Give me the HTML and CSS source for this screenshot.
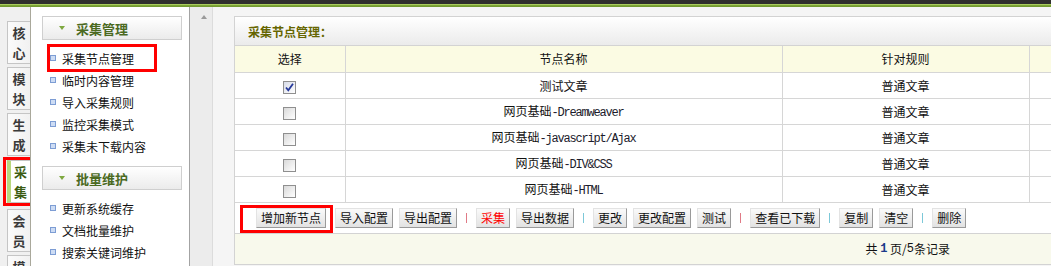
FILE: index.html
```html
<!DOCTYPE html>
<html lang="zh">
<head>
<meta charset="utf-8">
<title>采集节点管理</title>
<link rel="stylesheet" href="styles.css">
</head>
<body>
<div class="topbar"></div>
<div class="layout">
  <div class="tabs">
    <div class="tab">核<br>心</div>
    <div class="tab">模<br>块</div>
    <div class="tab">生<br>成</div>
    <div class="tab on">采<br>集</div>
    <div class="tab">会<br>员</div>
    <div class="tab">模<br>板</div>
  </div>
  <div class="sidebar">
    <div class="menu-head"><span class="tri"></span>采集管理</div>
    <ul class="menu">
      <li class="hl">采集节点管理</li>
      <li>临时内容管理</li>
      <li>导入采集规则</li>
      <li>监控采集模式</li>
      <li>采集未下载内容</li>
    </ul>
    <div class="menu-head"><span class="tri"></span>批量维护</div>
    <ul class="menu">
      <li>更新系统缓存</li>
      <li>文档批量维护</li>
      <li>搜索关键词维护</li>
    </ul>
  </div>
  <div class="scroll"><span class="up"></span></div>
  <div class="main">
    <div class="box">
      <div class="box-title">采集节点管理：</div>
      <table class="grid">
        <colgroup><col class="c1"><col class="c2"><col class="c3"><col class="c4"></colgroup>
        <thead>
          <tr><th>选择</th><th>节点名称</th><th>针对规则</th><th></th></tr>
        </thead>
        <tbody>
          <tr><td><span class="cb checked"><svg width="11" height="11" viewBox="0 0 11 11"><path d="M2 5.5 L4.3 8.3 L9 1.8" fill="none" stroke="#26399a" stroke-width="1.8"/></svg></span></td><td>测试文章</td><td>普通文章</td><td></td></tr>
          <tr><td><span class="cb"></span></td><td>网页基础<span class="en">-Dreamweaver</span></td><td>普通文章</td><td></td></tr>
          <tr><td><span class="cb"></span></td><td>网页基础<span class="en">-javascript/Ajax</span></td><td>普通文章</td><td></td></tr>
          <tr><td><span class="cb"></span></td><td>网页基础<span class="en">-DIV&amp;CSS</span></td><td>普通文章</td><td></td></tr>
          <tr><td><span class="cb"></span></td><td>网页基础<span class="en">-HTML</span></td><td>普通文章</td><td></td></tr>
        </tbody>
      </table>
      <div class="toolbar">
        <button class="btn first hl-btn">增加新节点</button>
        <button class="btn">导入配置</button>
        <button class="btn">导出配置</button>
        <span class="sep red"></span>
        <button class="btn warn">采集</button>
        <button class="btn">导出数据</button>
        <span class="sep cyan"></span>
        <button class="btn">更改</button>
        <button class="btn">更改配置</button>
        <button class="btn">测试</button>
        <span class="sep red"></span>
        <button class="btn">查看已下载</button>
        <span class="sep cyan"></span>
        <button class="btn">复制</button>
        <button class="btn">清空</button>
        <span class="sep cyan"></span>
        <button class="btn">删除</button>
      </div>
      <div class="pager">共 <b class="num">1</b> 页/<span class="num2">5</span>条记录</div>
    </div>
  </div>
</div>
</body>
</html>
```
FILE: styles.css
```css
*, *::before, *::after { box-sizing: border-box; }
html, body { margin: 0; padding: 0; }
body {
  width: 1051px;
  height: 266px;
  overflow: hidden;
  background: #f5f5f5;
  font-family: "Noto Sans CJK SC", "Liberation Sans", sans-serif;
  font-size: 12px;
  color: #000;
}
.topbar {
  height: 7px;
  background: linear-gradient(#2f2f2d 0, #2f2f2d 4px, #a9cc5e 4px, #a9cc5e 5px, #82aa38 5px, #6e9530 7px);
}
.layout { display: flex; height: 259px; overflow: hidden; }

/* left tabs */
.tabs {
  flex: none;
  width: 31px;
  border-right: 1px solid #a9a89b;
  background: #f0f0f0;
  padding-top: 14px;
  overflow: hidden;
}
.tab {
  margin-left: 7px;
  width: 23px;
  height: 43px;
  margin-bottom: 3px;
  border: 1px solid #c5c5c5;
  border-right: none;
  background: linear-gradient(90deg, #fbfbfb, #f1f1f1);
  display: flex;
  align-items: center;
  justify-content: center;
  text-align: center;
  font-weight: bold;
  font-size: 13px;
  line-height: 20px;
  color: #3a3a3a;
}
.tab.on {
  position: relative;
  margin-top: 4px;
  margin-bottom: 6px;
  background: #fff;
  border-left: 4px solid #b8d67c;
  color: #3c5c12;
}
.tab.on::after {
  content: "";
  position: absolute;
  left: -8px;
  top: -4px;
  width: 30px;
  bottom: -4px;
  border: 3px solid #f00;
}

/* sidebar */
.sidebar {
  flex: none;
  width: 159px;
  border-right: 1px solid #a3a3a3;
  background: #fff;
  padding: 9px 7px 0 11px;
}
.menu-head {
  height: 24px;
  border: 1px solid #cfcfcf;
  background: linear-gradient(#ffffff, #ebebeb);
  font-weight: bold;
  font-size: 13px;
  color: #4b6a1f;
  display: flex;
  align-items: center;
  padding-left: 16px;
}
.tri {
  width: 0;
  height: 0;
  border-left: 3px solid transparent;
  border-right: 3px solid transparent;
  border-top: 4px solid #7ea83f;
  margin-right: 11px;
  box-sizing: content-box;
}
.menu {
  list-style: none;
  margin: 0;
  padding: 7px 0 9px 8px;
}
.menu li {
  position: relative;
  height: 22px;
  display: flex;
  align-items: center;
  color: #111;
}
.menu li::before {
  content: "";
  width: 6px;
  height: 6px;
  border: 1px solid #7d9dd4;
  background: #cddcf4;
  margin-right: 6px;
}
.menu li.hl::after {
  content: "";
  position: absolute;
  left: -3px;
  top: -3px;
  width: 110px;
  height: 28px;
  border: 3px solid #f00;
}

/* scroll column */
.scroll {
  flex: none;
  width: 23px;
  background: #ececec;
  border-right: 1px solid #dcdcdc;
  padding: 8px 0 0 11px;
}
.up {
  display: block;
  width: 0;
  height: 0;
  box-sizing: content-box;
  border-left: 3.5px solid transparent;
  border-right: 3.5px solid transparent;
  border-bottom: 4px solid #9a9a9a;
}

/* main */
.main {
  flex: 1;
  min-width: 0;
  overflow: hidden;
  padding: 9px 0 0 21px;
}
.box {
  width: 900px;
  border: 1px solid #d3d3d3;
  background: #fff;
}
.box-title {
  height: 29px;
  border-bottom: 1px solid #d3d3d3;
  background: linear-gradient(#ffffff, #ebebeb);
  padding-left: 13px;
  display: flex;
  align-items: center;
  font-weight: bold;
  color: #666600;
}
.grid {
  width: 898px;
  table-layout: fixed;
  border-collapse: collapse;
}
.grid .c1 { width: 110px; }
.grid .c2 { width: 437px; }
.grid .c3 { width: 247px; }
.grid .c4 { width: 104px; }
.grid th, .grid td {
  height: 26px;
  padding: 0;
  text-align: center;
  vertical-align: middle;
  border-right: 1px solid #d6d6d6;
  border-bottom: 1px solid #d6d6d6;
  font-weight: normal;
  color: #111;
}
.grid th { background: #fbfbe3; }
.grid th:last-child, .grid td:last-child { border-right: none; }
.en {
  font-family: "Liberation Mono", monospace;
  font-size: 12px;
  letter-spacing: -1.2px;
  color: #1c1c2c;
}
.cb {
  display: inline-block;
  width: 13px;
  height: 13px;
  border: 1px solid #8f8f8f;
  background: linear-gradient(135deg, #d9d9d9, #ffffff);
  vertical-align: middle;
}
.cb.checked { background: linear-gradient(135deg, #d7dbe8, #ffffff); }
.cb svg { display: block; }

/* toolbar */
.toolbar {
  height: 31px;
  border-bottom: 1px solid #d3d3d3;
  display: flex;
  align-items: center;
  gap: 6px;
  padding-left: 21px;
}
.btn {
  height: 20px;
  padding: 0 4px;
  margin: 0;
  border: 1px solid;
  border-color: #e3e3e3 #9a9a9a #9a9a9a #e3e3e3;
  background: linear-gradient(#fafafa, #e2e2e2);
  font-family: "Noto Sans CJK SC", sans-serif;
  font-size: 12px;
  line-height: 18px;
  color: #111;
}
.btn.warn { color: #f00; }
.btn.first { margin-right: 3px; }
.hl-btn { position: relative; }
.hl-btn::after {
  content: "";
  position: absolute;
  left: -17px;
  top: -4px;
  right: -8px;
  bottom: -6px;
  border: 3px solid #f00;
}
.sep {
  width: 1px;
  height: 10px;
  margin: 0 3px;
}
.sep.red { background: #e07a86; }
.sep.cyan { background: #7cc8d8; }

/* pager */
.pager {
  height: 30px;
  background: #f8f9ec;
  display: flex;
  align-items: center;
  justify-content: flex-end;
  padding-right: 183px;
  white-space: pre;
  color: #111;
}
.num {
  font-family: "Liberation Mono", monospace;
  color: #1a3a8a;
  font-size: 12px;
}
.num2 {
  font-family: "Liberation Mono", monospace;
  font-size: 12px;
}
```
